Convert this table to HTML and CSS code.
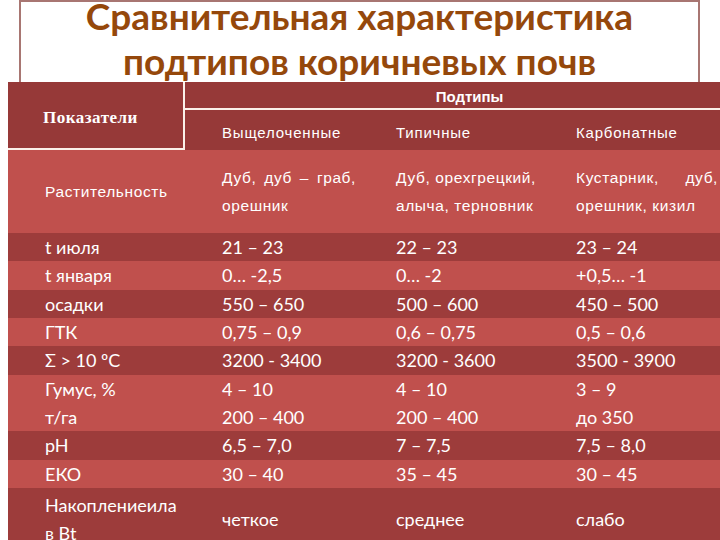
FILE: index.html
```html
<!DOCTYPE html>
<html lang="ru">
<head>
<meta charset="utf-8">
<link rel="stylesheet" href="styles.css">
</head>
<body>
<div class="slide">
  <div class="title-box">
    <h1 class="title"><span class="l1">Сравнительная характеристика</span><span class="l2">подтипов коричневых почв</span></h1>
  </div>
  <table class="soil">
    <colgroup>
      <col class="c1"><col class="c2"><col class="c3"><col class="c4">
    </colgroup>
    <thead>
      <tr class="h1">
        <th rowspan="2" class="ind">Показатели</th>
        <th colspan="3" class="sub">Подтипы</th>
      </tr>
      <tr class="h2">
        <th>Выщелоченные</th>
        <th>Типичные</th>
        <th>Карбонатные</th>
      </tr>
    </thead>
    <tbody>
      <tr class="veg">
        <td>Растительность</td>
        <td><p class="just">Дуб, дуб – граб, орешник</p></td>
        <td><p class="just">Дуб, орехгрецкий, алыча, терновник</p></td>
        <td><p class="just">Кустарник, дуб, орешник, кизил</p></td>
      </tr>
      <tr class="dark"><td>t июля</td><td>21 – 23</td><td>22 – 23</td><td>23 – 24</td></tr>
      <tr class="light"><td>t января</td><td>0… -2,5</td><td>0… -2</td><td>+0,5… -1</td></tr>
      <tr class="dark"><td>осадки</td><td>550 – 650</td><td>500 – 600</td><td>450 – 500</td></tr>
      <tr class="light"><td>ГТК</td><td>0,75 – 0,9</td><td>0,6 – 0,75</td><td>0,5 – 0,6</td></tr>
      <tr class="dark"><td>Σ &gt; 10 ºС</td><td>3200 - 3400</td><td>3200 - 3600</td><td>3500 - 3900</td></tr>
      <tr class="light"><td>Гумус, %<br>т/га</td><td>4 – 10<br>200 – 400</td><td>4 – 10<br>200 – 400</td><td>3 – 9<br>до 350</td></tr>
      <tr class="dark"><td>pH</td><td>6,5 – 7,0</td><td>7 – 7,5</td><td>7,5 – 8,0</td></tr>
      <tr class="light"><td>ЕКО</td><td>30 – 40</td><td>35 – 45</td><td>30 – 45</td></tr>
      <tr class="dark last"><td>Накоплениеила в Bt</td><td>четкое</td><td>среднее</td><td>слабо</td></tr>
    </tbody>
  </table>
</div>
</body>
</html>
```

FILE: styles.css
```css
html, body {
  margin: 0;
  padding: 0;
  background: #ffffff;
}

.slide {
  width: 720px;
  height: 540px;
  overflow: hidden;
  background: #ffffff;
}

.title-box {
  margin-left: 19px;
  width: 677px;
  height: 80px;
  border: 2px solid #a87672;
  border-bottom: none;
  overflow: hidden;
  background: #ffffff;
}

.title {
  margin: 0;
  font-family: Lato, "Open Sans", sans-serif;
  font-weight: 700;
  font-size: 37px;
  color: #95480b;
  text-align: center;
}

.l1 {
  display: block;
  line-height: 28px;
}

.l2 {
  display: block;
  margin-top: 9px;
  line-height: 43px;
}

.soil {
  margin-left: 8px;
  width: 713px;
  table-layout: fixed;
  border-collapse: separate;
  border-spacing: 0;
  color: #ffffff;
}

.c1 { width: 177px; }
.c2 { width: 174px; }
.c3 { width: 180px; }
.c4 { width: 182px; }

.soil th, .soil td {
  padding: 0 3px 0 37px;
  text-align: left;
  vertical-align: middle;
}

.h1 th, .h2 th {
  background: #963938;
}

.h1 {
  height: 26px;
}

.h2 {
  height: 42px;
}

.soil .ind {
  font-family: "Liberation Serif", serif;
  font-weight: 700;
  font-size: 17px;
  letter-spacing: 0.5px;
  border-right: 2px solid #fbf1ea;
  border-bottom: 2px solid #fbf1ea;
  padding-left: 35px;
  padding-top: 6px;
}

.soil .sub {
  font-family: "Liberation Sans", sans-serif;
  font-weight: 700;
  font-size: 15px;
  text-align: center;
  padding-left: 36px;
  padding-top: 2px;
}

.h2 th {
  border-top: 2px solid #fbf1ea;
  font-family: "Liberation Sans", sans-serif;
  font-weight: 400;
  font-size: 15px;
  letter-spacing: 0.8px;
  padding-top: 4px;
}

.veg td {
  background: #c0504d;
  height: 83px;
  font-family: "Liberation Sans", sans-serif;
  font-size: 15.5px;
  letter-spacing: 0.6px;
  line-height: 28px;
}

.just {
  margin: 0;
  text-align: justify;
}

tbody tr.dark td, tbody tr.light td {
  font-family: Lato, "Open Sans", sans-serif;
  font-size: 18px;
  line-height: 28.35px;
}

tr.dark td {
  background: #9d3c3b;
}

tr.light td {
  background: #c0504d;
}

tr.last td {
  padding-top: 3px;
  padding-bottom: 4px;
}
```
